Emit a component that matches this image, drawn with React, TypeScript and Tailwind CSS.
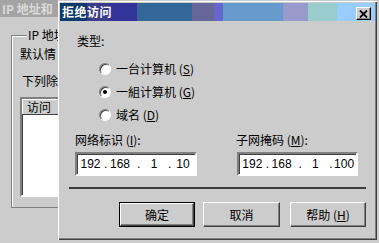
import React from 'react';

function Radio({ checked }: { checked?: boolean }) {
  return (
    <span className="flex h-[12px] w-[12px] shrink-0 items-center justify-center rounded-full border border-b-white border-l-[#808080] border-r-white border-t-[#808080] bg-white shadow-[inset_1px_1px_0_#404040]">
      {checked && <span className="h-[4px] w-[4px] rounded-full bg-black" />}
    </span>
  );
}

function Key({ k }: { k: string }) {
  return (
    <>
      {' ('}
      <span className="underline underline-offset-1">{k}</span>
      {')'}
    </>
  );
}

function IpBox({ parts }: { parts: string[] }) {
  return (
    <div className="flex h-[24px] w-full items-center border-2 border-b-white border-l-[#808080] border-r-white border-t-[#808080] bg-white font-['Liberation_Sans',sans-serif] text-[12px] leading-[14px] shadow-[inset_1px_1px_0_#404040]">
      <span className="w-[27px] text-center">{parts[0]}</span>
      <span className="w-[3px]">.</span>
      <span className="mr-[4px] w-[26px] text-center">{parts[1]}</span>
      <span className="w-[3px]">.</span>
      <span className="w-[28px] text-center">{parts[2]}</span>
      <span className="w-[3px]">.</span>
      <span className="w-[24px] text-center">{parts[3]}</span>
    </div>
  );
}

function Btn({ children, primary, className }: { children: React.ReactNode; primary?: boolean; className?: string }) {
  return (
    <div className={`h-[25px] ${primary ? 'border border-black' : ''} ${className ?? ''}`}>
      <div className="flex h-full w-full items-center justify-center border border-b-[#404040] border-l-white border-r-[#404040] border-t-white shadow-[inset_-1px_-1px_0_#808080]">
        {children}
      </div>
    </div>
  );
}

export default function App() {
  return (
    <div className="relative h-[243px] w-[379px] overflow-hidden bg-[#cccccc] font-['Noto_Sans_CJK_SC',sans-serif] text-[12px] leading-[14px] text-black">
      {/* window behind the dialog, only its left strip shows */}
      <div className="h-[243px] w-[58px] overflow-hidden">
        <div className="w-[379px]">
          <div className="flex h-[17px] items-center bg-[#a4a4a4] pl-[2px] font-bold text-[#dadada]">IP 地址和</div>
          <div className="px-[11px] pt-[11px]">
            <fieldset className="h-[180px] border border-[#808080] pl-[8px] shadow-[inset_1px_1px_0_#ffffff]">
              <legend className="ml-[7px] bg-[#cccccc] px-[1px]">IP 地址</legend>
              <p className="mt-[5px] whitespace-nowrap">默认情</p>
              <p className="ml-[2px] mt-[13px] whitespace-nowrap">下列除</p>
              <div className="mt-[9px] h-[100px] w-[280px] border-2 border-b-white border-l-[#808080] border-r-white border-t-[#808080] bg-white shadow-[inset_1px_1px_0_#404040]">
                <div className="flex h-[16px] border-b border-[#404040] bg-[#cccccc]">
                  <div className="flex w-[60px] items-center border-l border-r border-t border-l-white border-r-[#808080] border-t-white pl-[4px]">访问</div>
                  <div className="flex-1 border-l border-t border-white" />
                </div>
              </div>
            </fieldset>
          </div>
        </div>
      </div>

      {/* dialog */}
      <div className="absolute left-[58px] top-[1px] flex h-[239px] w-[319px] flex-col bg-[#cccccc] p-[2px] shadow-[inset_1px_1px_0_#ffffff,inset_-1px_-1px_0_#404040,inset_-2px_-2px_0_#808080]">
        <div className="flex h-[18px] shrink-0 items-start bg-[linear-gradient(to_right,#0b3a6b_0_27px,#3b3b8b_27px_49px,#333399_49px_77px,#336699_77px_132px,#666699_132px_154px,#6666cc_154px_163px,#6699cc_163px_223px,#9999cc_223px_248px,#99cccc_248px_277px,#99ccff_277px_315px)]">
          <span className="pl-[2px] font-bold leading-[18px] tracking-[0.5px] text-white">拒绝访问</span>
          <div className="ml-auto mr-[4px] mt-[4px] flex h-[13px] w-[15px] items-center justify-center border border-b-black border-l-white border-r-black border-t-white bg-[#cccccc] shadow-[inset_-1px_-1px_0_#808080]">
            <svg width="9" height="8" viewBox="0 0 9 8">
              <path d="M1 0.5 L8 7.5 M8 0.5 L1 7.5" stroke="#000" strokeWidth="1.8" fill="none" />
            </svg>
          </div>
        </div>

        <p className="ml-[17px] mt-[13px]">类型:</p>

        <div className="ml-[39px] mt-[14px] flex flex-col gap-[9px]">
          <div className="flex h-[14px] items-center gap-[5px]">
            <Radio />
            <span>一台计算机<Key k="S" /></span>
          </div>
          <div className="flex h-[14px] items-center gap-[5px]">
            <Radio checked />
            <span>一組计算机<Key k="G" /></span>
          </div>
          <div className="flex h-[14px] items-center gap-[5px]">
            <Radio />
            <span>域名<Key k="D" /></span>
          </div>
        </div>

        <div className="ml-[15px] mt-[11px] flex gap-[40px]">
          <div className="w-[122px]">
            <p>网络标识<Key k="I" />:</p>
            <div className="mt-[5px]">
              <IpBox parts={['192', '168', '1', '10']} />
            </div>
          </div>
          <div className="w-[121px]">
            <p className="-ml-[1px]">子网掩码<Key k="M" />:</p>
            <div className="mt-[5px]">
              <IpBox parts={['192', '168', '1', '100']} />
            </div>
          </div>
        </div>

        <div className="ml-[9px] mt-[11px] h-[2px] w-[297px] bg-[#3c3c3c]" />

        <div className="ml-[59px] mt-[13px] flex">
          <Btn primary className="w-[76px]">确定</Btn>
          <Btn className="ml-[8px] w-[77px]">取消</Btn>
          <Btn className="ml-[10px] w-[76px]">帮助<Key k="H" /></Btn>
        </div>
      </div>
    </div>
  );
}
